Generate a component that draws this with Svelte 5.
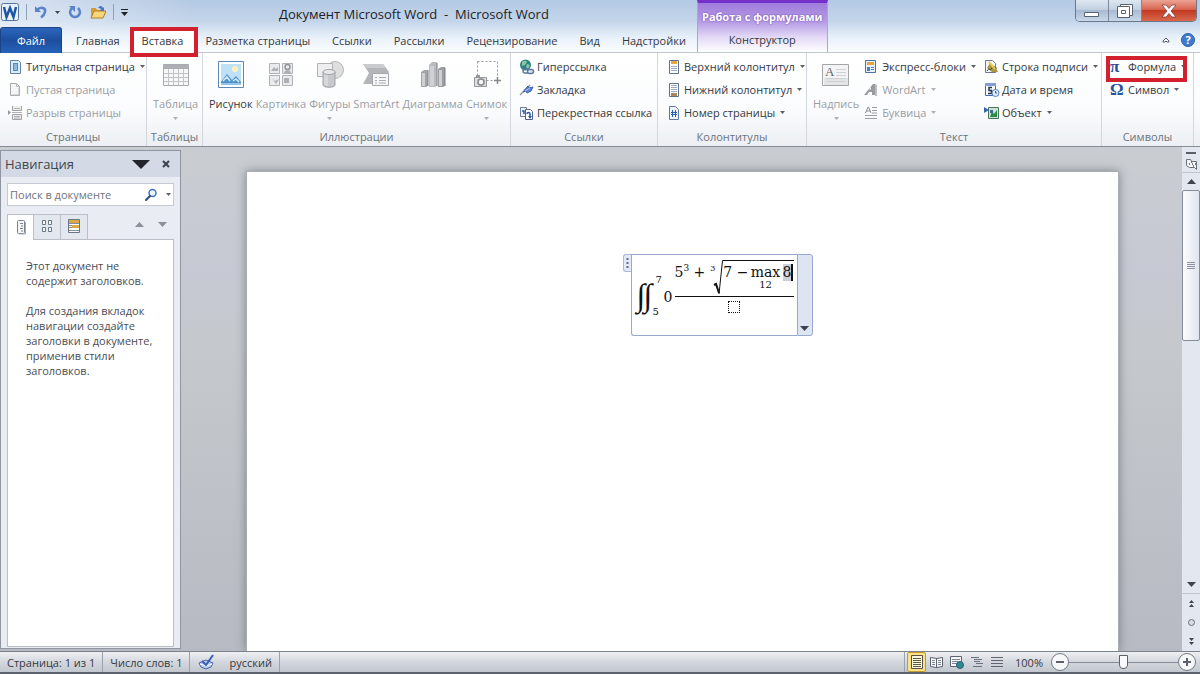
<script>
	const tabs = [
		'Главная',
		'Вставка',
		'Разметка страницы',
		'Ссылки',
		'Рассылки',
		'Рецензирование',
		'Вид',
		'Надстройки'
	];

	// kind "big" is a tall button with the label below its icon,
	// kind "rows" is a column of small buttons
	const groups = [
		{
			title: 'Страницы',
			parts: [
				{
					kind: 'rows',
					items: [
						{ icon: 'cover', label: 'Титульная страница', menu: true },
						{ icon: 'blank', label: 'Пустая страница', off: true },
						{ icon: 'break', label: 'Разрыв страницы', off: true }
					]
				}
			]
		},
		{
			title: 'Таблицы',
			parts: [{ kind: 'big', icon: 'table', label: 'Таблица', menu: true, off: true }]
		},
		{
			title: 'Иллюстрации',
			parts: [
				{ kind: 'big', icon: 'picture', label: 'Рисунок' },
				{ kind: 'big', icon: 'clipart', label: 'Картинка', off: true },
				{ kind: 'big', icon: 'shapes', label: 'Фигуры', menu: true, off: true },
				{ kind: 'big', icon: 'smartart', label: 'SmartArt', off: true },
				{ kind: 'big', icon: 'chart', label: 'Диаграмма', off: true },
				{ kind: 'big', icon: 'snapshot', label: 'Снимок', menu: true, off: true }
			]
		},
		{
			title: 'Ссылки',
			parts: [
				{
					kind: 'rows',
					items: [
						{ icon: 'link', label: 'Гиперссылка' },
						{ icon: 'bookmark', label: 'Закладка' },
						{ icon: 'crossref', label: 'Перекрестная ссылка' }
					]
				}
			]
		},
		{
			title: 'Колонтитулы',
			parts: [
				{
					kind: 'rows',
					items: [
						{ icon: 'header', label: 'Верхний колонтитул', menu: true },
						{ icon: 'footer', label: 'Нижний колонтитул', menu: true },
						{ icon: 'number', label: 'Номер страницы', menu: true }
					]
				}
			]
		},
		{
			title: 'Текст',
			parts: [
				{ kind: 'big', icon: 'textbox', label: 'Надпись', menu: true, off: true },
				{
					kind: 'rows',
					items: [
						{ icon: 'quick', label: 'Экспресс-блоки', menu: true },
						{ icon: 'wordart', label: 'WordArt', menu: true, off: true },
						{ icon: 'dropcap', label: 'Буквица', menu: true, off: true }
					]
				},
				{
					kind: 'rows',
					items: [
						{ icon: 'signature', label: 'Строка подписи', menu: true },
						{ icon: 'date', label: 'Дата и время' },
						{ icon: 'object', label: 'Объект', menu: true }
					]
				}
			]
		},
		{
			title: 'Символы',
			parts: [
				{
					kind: 'rows',
					items: [
						{ icon: 'pi', label: 'Формула', menu: true, marked: true },
						{ icon: 'omega', label: 'Символ', menu: true }
					]
				}
			]
		}
	];

	const views = ['print', 'reading', 'web', 'outline', 'draft'];
	const viewNames = {
		print: 'Разметка страницы',
		reading: 'Режим чтения',
		web: 'Веб-документ',
		outline: 'Структура',
		draft: 'Черновик'
	};

	let activeTab = $state('Вставка');
	let view = $state('print');
	let zoom = $state(100);
	let query = $state('');
</script>

{#snippet caret()}
	<svg class="caret" viewBox="0 0 5 3" width="5" height="3"><path d="M0 0h5L2.500 3z" fill="currentColor" /></svg>
{/snippet}

{#snippet small(name)}
	<svg class="icon" viewBox="0 0 16 16" width="16" height="16" fill="none">
		{#if name === 'cover'}
			<path d="M2.500 1.500h8l2 2v11h-10z" fill="#dcebf8" stroke="#5f83aa" />
			<path d="M5 4h5v8H5z" fill="#4b8cc9" />
			<path d="M6 6h3M6 8h3M6 10h3" stroke="#cfe5f7" />
		{:else if name === 'blank'}
			<path d="M2.500 1.500h6l3 3v9h-9z" fill="#f6f6f7" stroke="#a4a6aa" />
			<path d="M8.500 1.500v3h3M11 6v7H4" stroke="#b8babd" />
		{:else if name === 'break'}
			<path d="M4.500 1v4.500h9V1M4.500 14.500v-5h9v5z" fill="#eceded" stroke="#a0a2a6" />
			<path d="M6 3.500h6M6 11.500h6M6 13h6M4 7.500h10" stroke="#b0b2b6" />
			<path d="M0 5l3 2.500L0 10z" fill="#9a9ca0" />
		{:else if name === 'link'}
			<circle cx="6.500" cy="6" r="5.500" fill="#2f8087" />
			<path d="M3 3c2-2 4-1 5 0L6 6 3 7zM8 5l3 1-2 4-2-2z" fill="#8bc7a5" />
			<rect x="4" y="10" width="6" height="4" rx="2" stroke="#60769c" stroke-width="1.500" />
			<rect x="8.500" y="10.500" width="6" height="4" rx="2" fill="#dbe4f2" stroke="#60769c" stroke-width="1.500" />
		{:else if name === 'bookmark'}
			<path d="M1 13L11 3" stroke="#8b98ad" stroke-width="1.500" />
			<path d="M4 10l5-6 1 2 4-1-2 4-4 2-1-2z" fill="#5b80d6" stroke="#3f62b5" />
			<path d="M6 9l5-3" stroke="#b5c9f4" />
		{:else if name === 'crossref'}
			<path d="M1.500 2.500h6v9h-6z" fill="#eef3fb" stroke="#6e7f9d" />
			<path d="M6.500 4.500h5l2 2v8h-7z" fill="#fff" stroke="#4e648c" />
			<path d="M3 6h2v3M8 9c0-2 3-2 3 0v3" stroke="#2c58a4" stroke-width="1.500" />
			<path d="M9 11h4l-2 3z" fill="#2c58a4" />
		{:else if name === 'header' || name === 'footer'}
			<path d="M3.500 1.500h9v13h-9z" fill="#fafbfc" stroke="#61728c" />
			<path d="M5 {name === 'header' ? 2 : 11}h6v3H5z" fill={name === 'header' ? '#e3a83e' : '#a8885c'} />
			<path
				d={name === 'header' ? 'M5 7.500h6M5 9.500h6M5 11.500h6' : 'M5 3.500h6M5 5.500h6M5 7.500h6M5 9.500h6'}
				stroke="#9eabc0"
			/>
		{:else if name === 'number'}
			<path d="M3.500 1.500h6l3 3v10h-9z" fill="#eef4fc" stroke="#61799e" />
			<path d="M6.500 5v7M9.500 5v7M5 7.500h6M5 9.500h6" stroke="#2e5eb0" />
		{:else if name === 'quick'}
			<path d="M1.500 1.500h10v12h-10z" fill="#e7f0fb" stroke="#4b73a9" />
			<path d="M3 3h7v3H3z" fill="#e8a33d" />
			<path d="M3 8h3v4H3z" fill="#4b7fc4" />
			<path d="M7 8.500h3M7 10.500h3" stroke="#4b7fc4" />
		{:else if name === 'wordart'}
			<path d="M0 13L9 2h2v11H8v-3H5l-2 3z" fill="#989a9e" />
			<path d="M7 7.500V5L5 7.500z" fill="#fff" />
			<path d="M11 2l2 1v11h-2z" fill="#bbbdc0" />
		{:else if name === 'dropcap'}
			<path d="M1.500 8L4 2h.5L7 8M2.500 6h3.500" stroke="#8c8e92" />
			<path d="M8 2.500h5M8 5.500h5M8 8h5M1 10.500h12M1 13.500h12" stroke="#9c9ea2" />
		{:else if name === 'signature'}
			<path d="M1.500 1.500h7l3 3v9h-10z" fill="#f4f5f7" stroke="#6d7888" />
			<path d="M3 9l3-5 2 3 4 2 2 4H8z" fill="#a7963e" />
			<path d="M3 12c2-4 3 1 5-3s3 1 5 0" stroke="#3c4043" />
			<path d="M5 3l6 7" stroke="#e5ca58" stroke-width="2" />
		{:else if name === 'date'}
			<path d="M1.500 1.500h10v12h-10z" fill="#f7fafe" stroke="#456ab0" />
			<path d="M1 1h11v3H1z" fill="#7f9fd6" />
			<path d="M8 5.500H5v3h2.500v3H4" stroke="#24344f" stroke-width="1.500" />
			<circle cx="11.500" cy="11" r="3.500" fill="#e4eefb" stroke="#5980bd" />
			<path d="M11.500 9v2H13" stroke="#355993" />
		{:else if name === 'object'}
			<path d="M4.500 2.500h10v11h-10z" fill="#cfe3d5" stroke="#477457" />
			<path d="M6 12l2-6 2 3 3-4v7z" fill="#2c8a4a" />
			<path d="M6 5h3v3H6z" fill="#3b6f8f" />
			<path d="M0 2l5 3-5 3z" fill="#3568ac" />
		{:else if name === 'search'}
			<circle cx="9.500" cy="6" r="3.500" stroke="#3f74bd" stroke-width="1.500" fill="#edf5ff" />
			<path d="M7 9l-4 4" stroke="#2b4a79" stroke-width="2" stroke-linecap="round" />
		{:else if name === 'headings'}
			<rect x="4.500" y="1.500" width="7" height="13" rx="1" fill="#f4f5f7" stroke="#7b828e" />
			<path d="M7 4.500h3M8 7h2M7 9.500h3M8 12h2" stroke="#7b828e" />
			<path d="M12.500 3v12H6" stroke="#a5acb6" />
		{:else if name === 'thumbs'}
			<path
				d="M3.500 2.500h3v4h-3zM9.500 2.500h3v4h-3zM3.500 9.500h3v4h-3zM9.500 9.500h3v4h-3z"
				fill="#fff"
				stroke="#66788f"
			/>
		{:else if name === 'results'}
			<path d="M2.500 1.500h11v13h-11z" fill="#fdfdfd" stroke="#6a7688" />
			<path d="M3 2h10v3H3zM6 7h7v3H6z" fill="#dda944" />
			<path d="M3 5.500h10M3 7.500h3M3 9.500h3M3 12.500h10" stroke="#7f8da1" />
		{:else if name === 'ruler'}
			<path d="M3.500 3.500h4l1 2h5v8l-2-2h-5l-3-2z" fill="#f6f7f9" stroke="#6b7079" />
			<path d="M6 8h1M9 8h1M12 8h1M8 6h1M10 10h1" stroke="#4d525a" stroke-width="1.500" />
		{:else if name === 'print'}
			<path d="M2.500 1.500h11v13h-11z" fill="#fff8dc" stroke="#565140" />
			<path d="M4 4.500h8M4 6.500h8M4 8.500h8M4 10.500h8M4 12.500h8" stroke="#5e5945" />
		{:else if name === 'reading'}
			<path d="M1.500 3.500l6 1 6-1v9l-6 1-6-1zM7.500 4v10" fill="#fafbfd" stroke="#5b6270" />
			<path d="M3 6.500h3M3 8.500h3M3 10.500h3M9 6.500h3M9 8.500h3M9 10.500h3" stroke="#7c8492" />
		{:else if name === 'web'}
			<path d="M1.500 2.500h11v10h-11z" fill="#f8f9fb" stroke="#5b6270" />
			<path d="M3 5.500h8M3 7.500h6M3 9.500h5" stroke="#7c8492" />
			<circle cx="11" cy="11" r="3.500" fill="#2d8a8d" stroke="#33607d" />
		{:else if name === 'outline'}
			<path d="M2 3.500h8M5 5.500h8M5 7.500h6M7 9.500h7M4 12.500h9" stroke="#6a717e" />
		{:else if name === 'draft'}
			<path d="M2 3.500h12M2 6.500h12M2 9.500h12M2 12.500h12" stroke="#5f6672" />
		{/if}
	</svg>
{/snippet}

{#snippet large(name)}
	<svg class="icon" viewBox="0 0 30 30" width="30" height="30" fill="none">
		{#if name === 'table'}
			<path d="M2.500 4.500h25v21h-25z" fill="#f7f7f8" stroke="#a9abb0" />
			<path d="M3 5h24v4H3z" fill="#aeb0b5" />
			<path d="M3 13.500h24M3 17.500h24M3 21.500h24M7.500 9v16M12.500 9v16M17.500 9v16M22.500 9v16" stroke="#c2c4c8" />
		{:else if name === 'picture'}
			<path d="M2.500 1.500h25v26h-25z" fill="#fff" stroke="#5d88b4" />
			<path d="M5 4h20v21H5z" fill="#bfe1f7" />
			<circle cx="19" cy="9" r="3" fill="#fff3bb" />
			<path d="M5 22l6-8 5 6 4-4 5 6v3H5z" fill="#4f93c9" />
			<path d="M7 21l4-4 3 4M17 21l3-2 3 3" stroke="#d5ecfa" stroke-width="1.500" />
			<path d="M5 23h20v2H5z" fill="#93c4e8" />
		{:else if name === 'clipart'}
			<path
				d="M3.500 3.500h10v10h-10zM16.500 3.500h10v10h-10zM3.500 15.500h10v10h-10zM16.500 15.500h10v10h-10z"
				fill="#ebebed"
				stroke="#b0b2b6"
			/>
			<circle cx="21.500" cy="7" r="2.500" stroke="#929498" stroke-width="1.500" />
			<path d="M18 13c0-4 7-4 7 0M5 11l3-4 2 2 2-2v4zM6 18l3 3 4-2-3 5zM18 18h5v5h-5z" fill="#aeb0b4" />
		{:else if name === 'shapes'}
			<circle cx="20" cy="10" r="8.500" fill="#dededf" stroke="#b5b7ba" />
			<path d="M2.500 3.500h15v13h-15z" fill="#eeeef0" stroke="#b0b2b6" />
			<path d="M8 12v13c0 3 12 3 12 0V12z" fill="#c7c8cb" stroke="#9fa1a5" />
			<path d="M10 14v11M12 14v12" stroke="#e5e6e8" />
			<ellipse cx="14" cy="12" rx="6" ry="2.500" fill="#e7e8ea" stroke="#9fa1a5" />
		{:else if name === 'smartart'}
			<path d="M2 4h20l6 8-6 12H2l6-11z" fill="#b3b5b9" />
			<path d="M2 4h20l3 4H5z" fill="#c9cbce" />
			<path d="M11.500 13.500h16v12h-16z" fill="#f7f7f8" stroke="#a5a7ab" />
			<path d="M14 17.500h2M18 17.500h7M14 20.500h2M18 20.500h7M14 23h2M18 23h7" stroke="#a9abaf" />
		{:else if name === 'chart'}
			<path d="M3 12l3-2h4v16l-2 1H3z" fill="#a3a5a9" />
			<path d="M11 5l3-3h5v24l-2 1h-6z" fill="#b9bbbe" />
			<path d="M20 9l3-2h4v19l-2 1h-5z" fill="#9b9da1" />
			<path d="M4 13h3v13H4zM12 6h4v20h-4zM21 10h3v16h-3z" fill="#ced0d3" />
			<path d="M10 10v16M19 3v23M27 8v18" stroke="#7d7f84" />
		{:else if name === 'snapshot'}
			<path d="M5.500 1.500h20v19h-20z" stroke="#989a9e" stroke-dasharray="2 2" />
			<path d="M2.500 17.500h12v9h-12z" fill="#dcdddf" stroke="#96989c" />
			<path d="M4 15h4v2H4z" fill="#96989c" />
			<circle cx="9" cy="22" r="3" fill="#f6f6f7" stroke="#85878b" stroke-width="1.500" />
			<path d="M25.500 17v7M22 20.500h7" stroke="#85878b" stroke-width="1.500" />
		{:else if name === 'textbox'}
			<path d="M1.500 4.500h26v21h-26z" fill="#f4f4f5" stroke="#a3a5a9" />
			<path d="M3 18h24v7H3z" fill="#e3e4e6" />
			<path d="M15 9.500h10M15 12.500h10M15 15.500h10M5 18.500h20M5 21.500h20" stroke="#cfd0d3" />
			<text x="4" y="16" font-family="Liberation Serif, serif" font-size="13" fill="#63656a">A</text>
		{/if}
	</svg>
{/snippet}

{#snippet smallButton(item)}
	<button class="row" class:off={item.off} class:marked={item.marked}>
		{#if item.icon === 'pi'}
			<span class="glyph">π</span>
		{:else if item.icon === 'omega'}
			<span class="glyph">Ω</span>
		{:else}
			{@render small(item.icon)}
		{/if}
		<span class="label">{item.label}</span>
		{#if item.menu}{@render caret()}{/if}
	</button>
{/snippet}

<div class="window">
	<header>
		<div class="main">
			<div class="titlebar">
				<div class="quick">
					<svg viewBox="0 0 18 18" width="18" height="18">
						<rect x=".5" y=".5" width="17" height="17" rx="2" fill="#eaf3fc" stroke="#53759f" />
						<path d="M3 4l2.500 10L9 5l3.500 9L15 4" fill="none" stroke="#1f57a6" stroke-width="2.500" />
					</svg>
					<i></i>
					<button aria-label="Отменить">
						<svg viewBox="0 0 14 14" width="14" height="14" fill="none">
							<path d="M3 5c4-4 9-2 8 2-.5 2.500-2 4-4 5.500" stroke="#5b83cb" stroke-width="2.500" />
							<path d="M1 1v6h6z" fill="#5b83cb" />
						</svg>
						{@render caret()}
					</button>
					<button aria-label="Повторить">
						<svg viewBox="0 0 14 14" width="14" height="14" fill="none">
							<path d="M4 3c-4 4-1 9 3 9s7-5 3-9" stroke="#5b83cb" stroke-width="2.500" />
							<path d="M1 1h6v6z" fill="#5b83cb" />
						</svg>
					</button>
					<button aria-label="Открыть">
						<svg viewBox="0 0 16 14" width="16" height="14">
							<path d="M1 3h5l1 2h6v8H1z" fill="#d99b32" />
							<path d="M4 6h12l-3 7H1z" fill="#f8d77b" stroke="#b47c21" />
							<path d="M8 3c2-3 4-2 5 0l1-1v4h-4l1-2c-1-1-2-1-3-1z" fill="#4c76c4" />
						</svg>
					</button>
					<i></i>
					<button aria-label="Настройка панели быстрого доступа">
						<svg viewBox="0 0 7 7" width="7" height="7"><path d="M0 0h7v1H0zM0 3h7L3.500 7z" fill="#222" /></svg>
					</button>
				</div>
				<h1>Документ Microsoft Word&nbsp; -&nbsp; Microsoft Word</h1>
			</div>
			<nav>
				<button class="file">Файл</button>
				{#each tabs as tab}
					<button class="tab" class:active={tab === activeTab} onclick={() => (activeTab = tab)}>{tab}</button>
				{/each}
			</nav>
		</div>
		<div class="context">
			<strong>Работа с формулами</strong>
			<button class="tab">Конструктор</button>
		</div>
		<div class="side">
			<div class="controls">
				<button aria-label="Свернуть">
					<svg viewBox="0 0 18 8" width="18" height="8"><path d="M1.500 2.500h14v4h-14z" fill="#fff" stroke="#59626f" /></svg>
				</button>
				<button aria-label="Развернуть">
					<svg viewBox="0 0 18 16" width="18" height="16" fill="#fff" stroke="#59626f">
						<path d="M4.500 1.500h12v11h-12z" />
						<path d="M1.500 3.500h12v11h-12z" />
						<path d="M5.500 7.500h4v3h-4z" />
					</svg>
				</button>
				<button class="close" aria-label="Закрыть">
					<svg viewBox="0 0 16 14" width="16" height="14">
						<path d="M1 1h4l3 3.500L11 1h4l-5 6 5 6h-4L8 9.500 5 13H1l5-6z" fill="#fff" stroke="#733" stroke-width=".7" />
					</svg>
				</button>
			</div>
			<div class="help">
				<button aria-label="Свернуть ленту">
					<svg viewBox="0 0 8 6" width="8" height="6"><path d="M4 1l3 3v1H5L4 4 3 5H1V4z" fill="#fff" stroke="#555d69" /></svg>
				</button>
				<button class="question" aria-label="Справка">?</button>
			</div>
		</div>
	</header>

	<div class="ribbon">
		{#each groups as group}
			<section>
				<div class="parts">
					{#each group.parts as part}
						{#if part.kind === 'big'}
							<button class="big" class:off={part.off}>
								{@render large(part.icon)}
								<span>{part.label}</span>
								{#if part.menu}{@render caret()}{/if}
							</button>
						{:else}
							<div class="rows">
								{#each part.items as item}
									{@render smallButton(item)}
								{/each}
							</div>
						{/if}
					{/each}
				</div>
				<h2>{group.title}</h2>
			</section>
		{/each}
	</div>

	<main>
		<aside>
			<div class="heading">
				<h3>Навигация</h3>
				<button aria-label="Параметры области">
					<svg viewBox="0 0 18 9" width="18" height="9"><path d="M0 0h18L9 9z" fill="#22262c" /></svg>
				</button>
				<button aria-label="Закрыть область">
					<svg viewBox="0 0 8 8" width="8" height="8"><path d="M1 1l6 6M7 1L1 7" stroke="#3c424b" stroke-width="2" /></svg>
				</button>
			</div>
			<div class="search">
				<input aria-label="Поиск в документе" placeholder="Поиск в документе" bind:value={query} />
				<button aria-label="Найти">{@render small('search')}</button>
				<button aria-label="Параметры поиска">{@render caret()}</button>
			</div>
			<div class="modes">
				<button class="on" aria-label="Заголовки">{@render small('headings')}</button>
				<button aria-label="Страницы">{@render small('thumbs')}</button>
				<button aria-label="Результаты">{@render small('results')}</button>
				<div class="steps">
					<button aria-label="Назад">
						<svg viewBox="0 0 9 5" width="9" height="5"><path d="M0 5h9L4.500 0z" fill="#8b8f99" /></svg>
					</button>
					<button aria-label="Вперед">
						<svg viewBox="0 0 9 5" width="9" height="5"><path d="M0 0h9L4.500 5z" fill="#8b8f99" /></svg>
					</button>
				</div>
			</div>
			<div class="hint">
				<p>Этот документ не содержит заголовков.</p>
				<p>Для создания вкладок навигации создайте заголовки в документе, применив стили заголовков.</p>
			</div>
		</aside>

		<div class="desk">
			<div class="page">
				<div class="equation">
					<span class="grip">
						<svg viewBox="0 0 7 16" width="7" height="16"><path d="M3.500 3v12" stroke="#5a6c9b" stroke-width="2" stroke-dasharray="2 2" /></svg>
					</span>
					<div class="formula">
						<span class="integral"><span>∫</span><span>∫</span></span>
						<span class="limits"><span>7</span><span>5</span></span>
						<span class="zero">0</span>
						<div class="fraction">
							<div class="numerator">
								<span>5<sup>3</sup> +</span>
								<span class="degree">3</span>
								<svg class="radical" viewBox="0 0 10 35" width="10" height="35" fill="none">
									<path d="M1 25l2-1 3 9" stroke="#111" stroke-width="2" />
									<path d="M6 34L9.500 .5h1" stroke="#111" />
								</svg>
								<div class="radicand">
									<span>7 −</span>
									<span class="max">max<small>12</small></span>
									<span class="cursor">8</span>
								</div>
							</div>
							<div class="denominator"><i></i></div>
						</div>
					</div>
					<button class="options" aria-label="Параметры формулы">
						<svg viewBox="0 0 9 5" width="9" height="5"><path d="M0 0h9L4.500 5z" fill="#3c4250" /></svg>
					</button>
				</div>
			</div>
		</div>

		<div class="scroll">
			<span class="split"></span>
			<button aria-label="Линейка">{@render small('ruler')}</button>
			<button class="arrow" aria-label="Вверх">
				<svg viewBox="0 0 9 5" width="9" height="5"><path d="M0 5h9L4.500 0z" fill="#3f444d" /></svg>
			</button>
			<div class="track">
				<div class="thumb">
					<svg viewBox="0 0 8 7" width="8" height="7"><path d="M0 .5h8M0 2.500h8M0 4.500h8M0 6.500h8" stroke="#8a919d" /></svg>
				</div>
			</div>
			<button class="arrow down" aria-label="Вниз">
				<svg viewBox="0 0 9 5" width="9" height="5"><path d="M0 0h9L4.500 5z" fill="#3f444d" /></svg>
			</button>
			<button class="jump" aria-label="Предыдущая страница">
				<svg viewBox="0 0 5 7" width="5" height="7"><path d="M0 3h5L2.500 0zM0 7h5L2.500 4z" fill="#3f444d" /></svg>
			</button>
			<button class="jump" aria-label="Выбор объекта перехода">
				<svg viewBox="0 0 7 7" width="7" height="7"><circle cx="3.500" cy="3.500" r="3" fill="#d9dce2" stroke="#6a707b" /></svg>
			</button>
			<button class="jump" aria-label="Следующая страница">
				<svg viewBox="0 0 5 7" width="5" height="7"><path d="M0 0h5L2.500 3zM0 4h5L2.500 7z" fill="#3f444d" /></svg>
			</button>
		</div>
	</main>

	<footer>
		<button class="cell">Страница: 1 из 1</button>
		<button class="cell">Число слов: 1</button>
		<button class="cell proof" aria-label="Правописание">
			<svg viewBox="0 0 16 16" width="18" height="16" fill="none">
				<path d="M1 9l7-3 7 3-2 4-5 2-5-2z" fill="#b9cdef" stroke="#4868a8" />
				<path d="M2 10l6 2 6-2" stroke="#fff" />
				<path d="M4 7l4 4 7-10" stroke="#3860b8" stroke-width="2" />
			</svg>
		</button>
		<button class="cell">русский</button>
		<div class="views">
			{#each views as name}
				<button class:on={view === name} aria-label={viewNames[name]} onclick={() => (view = name)}>
					{@render small(name)}
				</button>
			{/each}
		</div>
		<output for="zoom">{zoom}%</output>
		<button class="round" aria-label="Уменьшить" onclick={() => (zoom = Math.max(10, zoom - 10))}>
			<svg viewBox="0 0 10 10" width="10" height="10"><path d="M1 5h8" stroke="#5c626c" stroke-width="2" /></svg>
		</button>
		<input id="zoom" type="range" min="0" max="200" bind:value={zoom} aria-label="Масштаб" />
		<button class="round" aria-label="Увеличить" onclick={() => (zoom = Math.min(200, zoom + 10))}>
			<svg viewBox="0 0 10 10" width="10" height="10"><path d="M1 5h8M5 1v8" stroke="#5c626c" stroke-width="2" /></svg>
		</button>
	</footer>
</div>

<style>
	:global(body) {
		margin: 0;
	}

	.window {
		display: flex;
		flex-direction: column;
		height: 100vh;
		overflow: hidden;
		font: 11px/15px 'Open Sans', 'Noto Sans', sans-serif;
		color: #35393f;
		background: #c3c6cc;
	}

	.window * {
		box-sizing: border-box;
	}

	button {
		display: flex;
		align-items: center;
		justify-content: center;
		padding: 0;
		border: 0;
		background: none;
		font: inherit;
		color: inherit;
		white-space: nowrap;
	}

	h1,
	h2,
	h3,
	p {
		margin: 0;
		font-weight: normal;
	}

	svg {
		display: block;
		flex: none;
	}

	/* title bar and tabs */

	header {
		display: flex;
		height: 53px;
		background:
			linear-gradient(to right, rgba(255, 255, 255, 0.5), rgba(255, 255, 255, 0) 16%),
			linear-gradient(#b4c9e3, #c3d5ea 40%, #e6eff9 70%, #fbfdff);
		border-bottom: 1px solid #c2c8d0;
	}

	.main {
		flex: 698 1 0;
		min-width: 0;
	}

	.titlebar {
		display: flex;
		align-items: center;
		height: 27px;
	}

	.quick {
		display: flex;
		align-items: center;
		gap: 8px;
		flex: 0 0 279px;
		padding: 0 0 3px 1px;
	}

	.quick i {
		width: 1px;
		height: 16px;
		margin: 0 -1px;
		background: #8fa2bb;
	}

	.quick button {
		gap: 7px;
		color: #222;
	}

	h1 {
		font-size: 13px;
		line-height: 18px;
		white-space: nowrap;
		color: #1d2126;
	}

	nav {
		display: flex;
		height: 26px;
	}

	.file {
		flex: none;
		width: 62px;
		margin-right: 3px;
		color: #fff;
		background: linear-gradient(#2c66ba, #1d4f9f 50%, #2562b8);
		border: 1px solid #1b4587;
		border-bottom: 0;
		border-radius: 3px 3px 0 0;
	}

	.tab {
		padding: 1px 11px 0;
	}

	.active {
		position: relative;
		background: #fff;
	}

	.active::after,
	.marked::after {
		content: '';
		position: absolute;
		inset: 0 -4px -4px -1px;
		border: 4px solid #d3202f;
	}

	.context {
		display: flex;
		flex: 129 1 0;
		flex-direction: column;
		align-items: center;
		border-top: 3px solid #752fcb;
		border-left: 1px solid #b59de0;
		border-right: 1px solid #b59de0;
		background: linear-gradient(#9f7bdb, #b79ee6 40%, #e3daf6 70%, #fff);
	}

	.context strong {
		height: 24px;
		padding-top: 6px;
		font-size: 11px;
		white-space: nowrap;
		color: #fff;
		text-shadow: 0 0 2px #6338a8;
	}

	.context .tab {
		height: 26px;
	}

	.side {
		display: flex;
		flex: 373 1 0;
		flex-direction: column;
		align-items: flex-end;
	}

	.controls {
		display: flex;
		height: 22px;
		margin-right: 3px;
		border: 1px solid #6c7889;
		border-top: 0;
		border-radius: 0 0 5px 5px;
		overflow: hidden;
	}

	.controls button {
		width: 33px;
		border-right: 1px solid #7c899b;
		background: linear-gradient(#dde7f2, #c2d0e1 45%, #a9bbd2 50%, #c9d8ea);
	}

	.controls button:first-child {
		align-items: flex-end;
		padding-bottom: 3px;
	}

	.controls .close {
		width: 54px;
		border: 0;
		background: linear-gradient(#eba394, #d8644e 45%, #c23a22 50%, #d9694d);
	}

	.help {
		display: flex;
		flex: 1;
		align-items: center;
		gap: 11px;
		padding: 5px 5px 0 0;
	}

	.question {
		width: 14px;
		height: 14px;
		border: 1px solid #2c5da6;
		border-radius: 50%;
		background: #3f7bca;
		color: #fff;
		font-weight: bold;
		line-height: 12px;
	}

	/* ribbon */

	.ribbon {
		display: grid;
		grid-template-columns: 147fr 56fr 308fr 147fr 149fr 295fr 92fr;
		height: 94px;
		padding-right: 6px;
		background: linear-gradient(#fff, #fbfcfd 60%, #eceff3);
		border-bottom: 1px solid #868c95;
	}

	section {
		display: flex;
		flex-direction: column;
		min-width: 0;
		padding-top: 2px;
		border-right: 1px solid #d3d7dd;
	}

	.parts {
		display: flex;
		flex: 1;
		gap: 3px;
		padding: 0 6px;
	}

	section h2 {
		height: 20px;
		font-size: 11px;
		line-height: 22px;
		text-align: center;
		color: #6d737d;
	}

	.rows {
		display: flex;
		flex-direction: column;
		align-items: flex-start;
		padding-left: 2px;
	}

	.row {
		position: relative;
		height: 23px;
		gap: 2px;
	}

	.caret {
		opacity: 0.8;
	}

	.row .caret {
		margin: 0 3px 0 3px;
	}

	.marked::after {
		inset: 1px 2px -4px -4px;
	}

	.glyph {
		width: 16px;
		text-align: left;
		font: bold 17px/20px 'Liberation Serif', serif;
		color: #2a4f9c;
	}

	.big {
		flex-direction: column;
		justify-content: flex-start;
		padding-top: 5px;
	}

	.big span {
		margin: 6px 0 5px;
		line-height: 16px;
	}

	.off {
		color: #9b9ea4;
	}

	/* work area */

	main {
		display: flex;
		flex: 1;
		min-height: 0;
		background: linear-gradient(#c9cdd1, #c6c9d3 25%, #c5c8cc 40%, #b7bac2);
	}

	aside {
		display: flex;
		flex-direction: column;
		width: 181px;
		margin: 3px 0 2px;
		padding-bottom: 1px;
		border: 1px solid #8f96a1;
		background: #e9ecf3;
	}

	.heading {
		display: flex;
		align-items: center;
		height: 26px;
		padding: 0 10px 0 4px;
		background: #d3dae5;
		color: #41464e;
	}

	h3 {
		flex: 1;
		font-size: 13px;
		line-height: 18px;
	}

	.heading button + button {
		margin-left: 12px;
	}

	.search {
		display: flex;
		align-items: center;
		height: 23px;
		margin: 6px 6px 8px;
		border: 1px solid #c5cad3;
		background: #fff;
	}

	.search input {
		flex: 1;
		min-width: 0;
		padding: 0 0 0 2px;
		border: 0;
		outline: 0;
		font: inherit;
	}

	.search input::placeholder {
		color: #6f747c;
	}

	.search button + button {
		width: 9px;
		margin-left: 5px;
	}

	.modes {
		display: flex;
		height: 26px;
		margin: 0 6px;
	}

	.modes > button {
		width: 27px;
		padding-bottom: 2px;
		border: 1px solid #b9bec8;
		border-left: 0;
		background: #e3e7ee;
	}

	.modes > .on {
		border-left: 1px solid #b9bec8;
		border-bottom: 0;
		background: #fff;
	}

	.steps {
		display: flex;
		flex: 1;
		align-items: center;
		justify-content: flex-end;
		gap: 14px;
		padding: 0 7px 4px 0;
		border-bottom: 1px solid #b9bec8;
	}

	.hint {
		flex: 1;
		margin: 0 6px;
		padding: 18px 16px 0 18px;
		border: 1px solid #b9bec8;
		border-top: 0;
		background: #fff;
		color: #4a4e55;
	}

	.hint p {
		margin-bottom: 15px;
	}

	.desk {
		display: flex;
		flex: 1;
		padding: 24px 63px 0 65px;
		overflow: hidden;
	}

	.page {
		display: flex;
		flex: 1;
		align-items: flex-start;
		justify-content: center;
		padding: 82px 36px 0 106px;
		border: 1px solid #a9adb4;
		border-bottom: 0;
		background: #fff;
		box-shadow: 0 0 9px rgba(60, 64, 72, 0.5);
	}

	.equation {
		display: flex;
		align-items: flex-start;
	}

	.grip {
		border: 1px solid #a9b8d6;
		border-right: 0;
		border-radius: 3px 0 0 3px;
		background: #e3e9f5;
	}

	.formula {
		display: flex;
		align-items: flex-start;
		height: 82px;
		padding: 4px 3px 0 5px;
		border: 1px solid #97a9cd;
		border-right: 0;
		border-radius: 0 0 0 3px;
		font: 14px/16px 'DejaVu Serif', serif;
		color: #111;
	}

	.integral {
		display: flex;
		width: 16px;
		padding-top: 18px;
		font: 32px/36px 'Liberation Serif', serif;
	}

	.integral span {
		width: 7px;
	}

	.limits {
		display: flex;
		flex-direction: column;
		justify-content: space-between;
		width: 11px;
		height: 42px;
		margin-top: 16px;
		font-size: 10px;
		line-height: 10px;
	}

	.limits span:first-child {
		padding-left: 3px;
	}

	.zero {
		width: 11px;
		margin-top: 30px;
	}

	.fraction {
		width: 119px;
	}

	.numerator {
		display: flex;
		height: 38px;
		padding-top: 1px;
		border-bottom: 1px solid #111;
	}

	.numerator > span:first-child {
		padding-top: 4px;
		white-space: nowrap;
	}

	sup {
		font-size: 9px;
		line-height: 9px;
	}

	.degree {
		width: 8px;
		padding: 5px 0 0 5px;
		font-size: 8px;
		line-height: 8px;
	}

	.radicand {
		display: flex;
		flex: 1;
		justify-content: space-between;
		height: 20px;
		padding-top: 3px;
		border-top: 1px solid #111;
		white-space: nowrap;
	}

	.max {
		display: flex;
		flex-direction: column;
		align-items: center;
	}

	small {
		font-size: 10px;
		line-height: 10px;
	}

	.cursor {
		height: 17px;
		border-right: 2px solid #111;
		background: #c9d0da;
	}

	.denominator {
		display: flex;
		justify-content: center;
		padding-top: 4px;
	}

	.denominator i {
		width: 12px;
		height: 12px;
		border: 1px dotted #111;
	}

	.options {
		align-items: flex-end;
		align-self: stretch;
		width: 16px;
		padding-bottom: 4px;
		border: 1px solid #97a9cd;
		border-radius: 0 3px 3px 0;
		background: #dde4f2;
	}

	.scroll {
		display: flex;
		flex-direction: column;
		align-items: center;
		width: 18px;
		background: #e3e8f0;
	}

	.split {
		width: 10px;
		height: 2px;
		margin: 5px 0 2px;
		background: #5b616b;
	}

	.arrow {
		align-self: stretch;
		height: 18px;
		border-top: 1px solid #c0c5cf;
	}

	.down {
		border-top: 0;
		border-bottom: 1px solid #c0c5cf;
	}

	.track {
		flex: 1;
		align-self: stretch;
	}

	.thumb {
		display: flex;
		align-items: center;
		justify-content: center;
		height: 39%;
		border: 1px solid #858d9b;
		border-radius: 2px;
		background: linear-gradient(to right, #fbfcfe, #dfe5ee);
	}

	.jump {
		height: 19px;
	}

	/* status bar */

	footer {
		display: flex;
		align-items: center;
		height: 23px;
		padding-right: 4px;
		border-top: 1px solid #7d838d;
		border-bottom: 2px solid #5d636e;
		background: linear-gradient(#eef0f3, #d3d7dd 50%, #c3c8d0);
	}

	.cell {
		height: 20px;
		padding: 0 7px;
		border-right: 1px solid #9ca2ad;
	}

	.proof {
		padding: 0 7px;
		border-right: 0;
	}

	.views {
		display: flex;
		gap: 1px;
		margin-left: auto;
		padding-left: 2px;
		border-left: 1px solid #9ca2ad;
	}

	.views button {
		width: 19px;
		height: 20px;
		border: 1px solid transparent;
		border-radius: 2px;
	}

	.views .on {
		border-color: #c79a2b;
		background: #fbe187;
	}

	output {
		margin: 0 8px 0 9px;
	}

	.round {
		width: 18px;
		height: 18px;
		border: 1px solid #757b86;
		border-radius: 50%;
		background: #f6f7f9;
	}

	input[type='range'] {
		width: 109px;
		height: 18px;
		margin: 0;
		appearance: none;
		background: linear-gradient(#868d98, #868d98) center / 100% 1px no-repeat;
	}

	input[type='range']::-webkit-slider-thumb {
		appearance: none;
		width: 9px;
		height: 14px;
		border: 1px solid #5c626d;
		border-radius: 1px 1px 5px 5px;
		background: #f8f9fb;
	}
</style>
